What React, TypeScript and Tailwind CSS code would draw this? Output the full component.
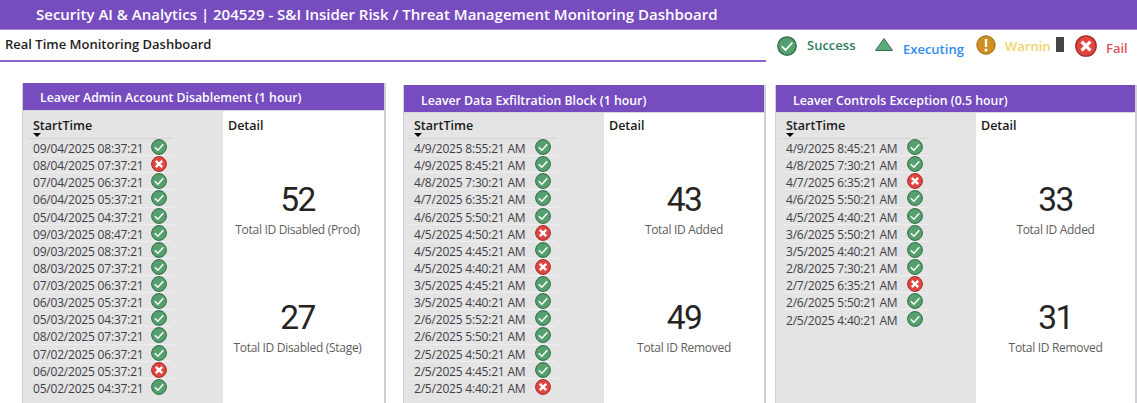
const F = "[font-family:'Open_Sans','Noto_Sans',sans-serif]";

function Ok({ s = 16 }: { s?: number }) {
  return (
    <svg width={s} height={s} viewBox="0 0 16 16" className="shrink-0">
      <circle cx="8" cy="8" r="7.4" fill="#55a06e" stroke="#2f6b45" strokeWidth="1" />
      <path d="M3.8 8.3 L6.9 11.2 L12.3 5.2" fill="none" stroke="#ffffff" strokeWidth="1.4" />
    </svg>
  );
}
function Bad({ s = 16 }: { s?: number }) {
  return (
    <svg width={s} height={s} viewBox="0 0 16 16" className="shrink-0">
      <circle cx="8" cy="8" r="7.4" fill="#e0463f" stroke="#a32a28" strokeWidth="1" />
      <path d="M4.8 4.8 L11.2 11.2 M11.2 4.8 L4.8 11.2" fill="none" stroke="#ffffff" strokeWidth="2.4" />
    </svg>
  );
}

type Row = [string, boolean];
const ok = (t: string): Row => [t, true];
const bad = (t: string): Row => [t, false];

const rows1: Row[] = [
  ok("09/04/2025 08:37:21"), bad("08/04/2025 07:37:21"), ok("07/04/2025 06:37:21"), ok("06/04/2025 05:37:21"),
  ok("05/04/2025 04:37:21"), ok("09/03/2025 08:47:21"), ok("09/03/2025 08:37:21"), ok("08/03/2025 07:37:21"),
  ok("07/03/2025 06:37:21"), ok("06/03/2025 05:37:21"), ok("05/03/2025 04:37:21"), ok("08/02/2025 07:37:21"),
  ok("07/02/2025 06:37:21"), bad("06/02/2025 05:37:21"), ok("05/02/2025 04:37:21"),
];
const rows2: Row[] = [
  ok("4/9/2025 8:55:21 AM"), ok("4/9/2025 8:45:21 AM"), ok("4/8/2025 7:30:21 AM"), ok("4/7/2025 6:35:21 AM"),
  ok("4/6/2025 5:50:21 AM"), bad("4/5/2025 4:50:21 AM"), ok("4/5/2025 4:45:21 AM"), bad("4/5/2025 4:40:21 AM"),
  ok("3/5/2025 4:45:21 AM"), ok("3/5/2025 4:40:21 AM"), ok("2/6/2025 5:52:21 AM"), ok("2/6/2025 5:50:21 AM"),
  ok("2/5/2025 4:50:21 AM"), ok("2/5/2025 4:45:21 AM"), bad("2/5/2025 4:40:21 AM"),
];
const rows3: Row[] = [
  ok("4/9/2025 8:45:21 AM"), ok("4/8/2025 7:30:21 AM"), bad("4/7/2025 6:35:21 AM"), ok("4/6/2025 5:50:21 AM"),
  ok("4/5/2025 4:40:21 AM"), ok("3/6/2025 5:50:21 AM"), ok("3/5/2025 4:40:21 AM"), ok("2/8/2025 7:30:21 AM"),
  bad("2/7/2025 6:35:21 AM"), ok("2/6/2025 5:50:21 AM"), ok("2/5/2025 4:40:21 AM"),
];

function Stat({ value, label }: { value: string; label: string }) {
  return (
    <div className="flex flex-col items-center">
      <div className="font-['Roboto',sans-serif] font-normal text-[33.5px] tracking-[-1.5px] leading-[40px] text-[#252423]">{value}</div>
      <div className="mt-[1px] text-[12px] leading-[18px] tracking-[-0.3px] text-[#605e5c] whitespace-nowrap">{label}</div>
    </div>
  );
}

function Card({
  title, rows, stats, className, listW, titleLeading, headPad, detailPad, statTop, shift,
}: {
  title: string; rows: Row[]; stats: [string, string][]; className: string; listW: string; titleLeading: string; headPad: string; detailPad: string; statTop: string; shift: string;
}) {
  return (
    <section className={`flex flex-col overflow-hidden h-[320px] border-l border-r-2 border-[#cfcfd6] ${className}`}>
      <div className={`h-[27px] shrink-0 bg-[#764cbf] text-white font-semibold text-[12.3px] ${titleLeading} pl-[17px] whitespace-nowrap`}>{title}</div>
      <div className="flex flex-1 min-h-0 border-t border-[#d8d8d8]">
        <div className={`w-[200px] shrink-0 bg-[#e4e4e4] pl-[5px] ${headPad}`}>
          <div className={`${listW} border-b border-[#d4d4d4] h-[21px] pl-[5px] relative`}>
            <div className="font-semibold text-[12.5px] leading-[16px] text-[#1a1a1a]">StartTime</div>
            <div className="absolute left-[5px] top-[15px] w-0 h-0 border-l-[4px] border-r-[4px] border-t-[4px] border-l-transparent border-r-transparent border-t-black" />
          </div>
          {rows.map(([t, good], i) => (
            <div key={i} className={`${listW} h-[17.14px] flex items-center pl-[5px] border-b border-[#eeeeee] last:border-b-0`}>
              <span className="pt-[4px] text-[12px] leading-[16px] tracking-[-0.2px] text-[#3f3f46] whitespace-nowrap">{t}</span>
              <span className="ml-auto mr-[6px] flex">{good ? <Ok /> : <Bad />}</span>
            </div>
          ))}
        </div>
        <div className={`flex-1 flex flex-col bg-white ${shift}`}>
          <div className={`pl-[5px] ${detailPad} font-semibold text-[12.5px] leading-[18px] text-[#1a1a1a]`}>Detail</div>
          <div className={`${statTop} flex flex-col gap-[59px]`}>
            {stats.map(([v, l]) => <Stat key={l} value={v} label={l} />)}
          </div>
        </div>
      </div>
    </section>
  );
}

export default function App() {
  return (
    <div className={`w-[1137px] h-[403px] overflow-hidden bg-white ${F}`}>
      <header className="h-[29px] bg-[#764cbf] border-b border-[#a58bd8] box-content text-white font-semibold text-[15px] leading-[29px] pl-[36px] whitespace-nowrap">
        Security AI &amp; Analytics | 204529 - S&amp;I Insider Risk / Threat Management Monitoring Dashboard
      </header>
      <div className="flex h-[53px]">
        <div className="w-[766px] h-[32px] border-b-2 border-[#8a63cc] pl-[5px] pt-[4px] font-semibold text-[13px] leading-[20px] text-[#1f1f1f] whitespace-nowrap">
          Real Time Monitoring Dashboard
        </div>
        <div className="flex-1">
          <div className="flex items-start pl-[11px] pt-[6px] font-semibold text-[13px] leading-[18px] whitespace-nowrap">
            <span className="flex"><Ok s={20} /></span>
            <span className="ml-[10px] mt-0 w-[48px] text-[#2e7d5b]">Success</span>
            <svg width="20" height="16" viewBox="0 0 20 16" className="ml-[19px] mt-[1px]">
              <path d="M10 1.5 L18.5 13.5 L1.5 13.5 Z" fill="#5aa978" stroke="#35724d" strokeWidth="1" />
            </svg>
            <span className="ml-[9px] mt-[4px] w-[61px] text-[#2f8cf0]">Executing</span>
            <svg width="20" height="20" viewBox="0 0 20 20" className="ml-[12px] mt-[-1px]">
              <circle cx="10" cy="10" r="9.2" fill="#d18f1f" stroke="#9c6a14" strokeWidth="1" />
              <path d="M10 4 V12" stroke="#ffffff" strokeWidth="2.4" />
              <circle cx="10" cy="15" r="1.5" fill="#ffffff" />
            </svg>
            <span className="ml-[9px] mt-[1px] w-[45px] text-[#eed56a]">Warnin</span>
            <span className="ml-[6px] mt-[1px] w-[8px] h-[15px] bg-[#444444]" />
            <span className="ml-[11px] mt-[-1px] flex"><Bad s={22} /></span>
            <span className="ml-[9px] mt-[3px] text-[#e2505a]">Fail</span>
          </div>
        </div>
      </div>
      <div className="flex items-start pl-[22px]">
        <Card
          title="Leaver Admin Account Disablement (1 hour)"
          rows={rows1}
          stats={[["52", "Total ID Disabled (Prod)"], ["27", "Total ID Disabled (Stage)"]]}
          className="w-[364px]"
          listW="w-[145px]"
          titleLeading="leading-[30px]"
          headPad="pt-[7px]"
          detailPad="pt-[6px]"
          statTop="mt-[45px]"
          shift="pr-[12px]"
        />
        <div className="w-[17px] shrink-0" />
        <Card
          title="Leaver Data Exfiltration Block (1 hour)"
          rows={rows2}
          stats={[["43", "Total ID Added"], ["49", "Total ID Removed"]]}
          className="w-[363px] mt-[2px]"
          listW="w-[148px]"
          titleLeading="leading-[31px]"
          headPad="pt-[5px]"
          detailPad="pt-[4px]"
          statTop="mt-[45px]"
          shift=""
        />
        <div className="w-[9px] shrink-0" />
        <Card
          title="Leaver Controls Exception (0.5 hour)"
          rows={rows3}
          stats={[["33", "Total ID Added"], ["31", "Total ID Removed"]]}
          className="w-[362px] mt-[2px]"
          listW="w-[148px]"
          titleLeading="leading-[31px]"
          headPad="pt-[5px]"
          detailPad="pt-[4px]"
          statTop="mt-[45px]"
          shift=""
        />
      </div>
    </div>
  );
}
